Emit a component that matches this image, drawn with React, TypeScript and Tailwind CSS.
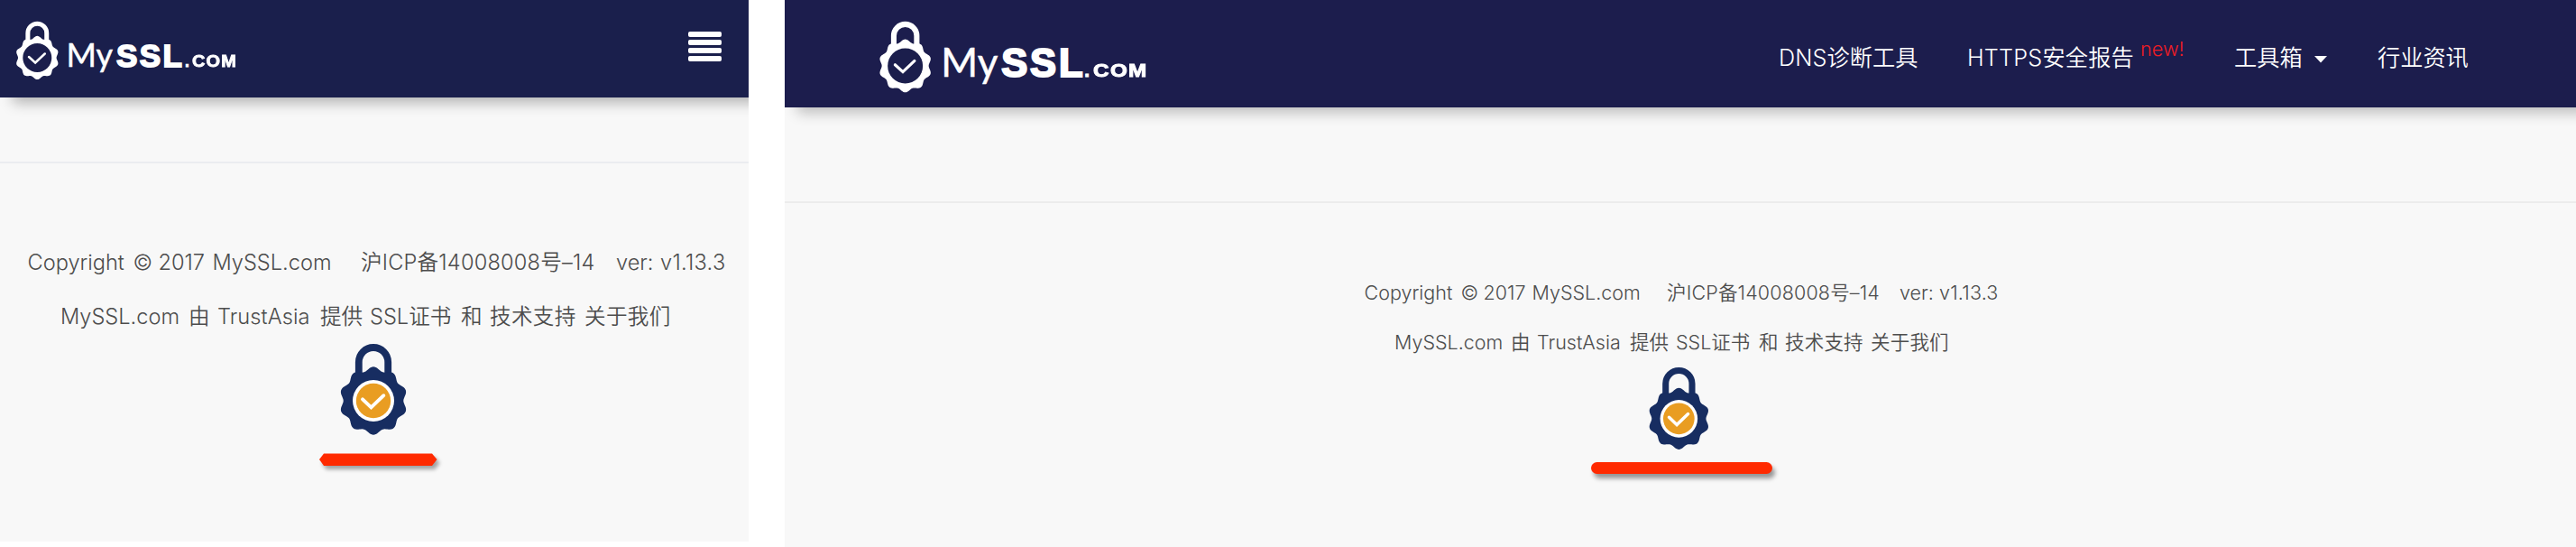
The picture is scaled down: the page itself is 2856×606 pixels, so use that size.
import React from 'react';

const SCALLOP =
  Array.from({ length: 181 }, (_, i) => {
    const a = (i * 2 * Math.PI) / 180;
    const r = 35.5 + 2.2 * Math.cos(10 * a);
    return `${i ? 'L' : 'M'}${(r * Math.sin(a)).toFixed(2)} ${(-r * Math.cos(a)).toFixed(2)}`;
  }).join('') + 'Z';

function LockLogo({ className }: { className: string }) {
  return (
    <svg viewBox="-38 -64 76 102" className={className}>
      <path d="M-16.3 -27V-42.7A16.3 16.3 0 0 1 16.3 -42.7V-27" fill="none" stroke="#fff" strokeWidth="7.8" />
      <path d={SCALLOP} fill="#fff" />
      <circle r="25" fill="#1b1e4c" />
      <path d="M-14.5 -1.5L-3.4 8.6L13.2 -7" fill="none" stroke="#fff" strokeWidth="4" strokeLinecap="round" />
    </svg>
  );
}

function LockBadge({ className }: { className: string }) {
  return (
    <svg viewBox="-38 -64 76 102" className={className}>
      <path d="M-16.2 -27V-42.8A16.2 16.2 0 0 1 16.2 -42.8V-27" fill="none" stroke="#172d61" strokeWidth="7.8" />
      <path d={SCALLOP} fill="#172d61" />
      <circle r="23" fill="#fff" />
      <circle r="19.2" fill="#e99d22" />
      <path d="M-12 -1.7L-2.5 7.4L11.3 -5.8" fill="none" stroke="#fff" strokeWidth="3.9" strokeLinecap="round" />
    </svg>
  );
}

function Word({ className, children }: { className: string; children: React.ReactNode }) {
  return <span className={`block shrink-0 whitespace-pre ${className}`}>{children}</span>;
}

function MobileView() {
  return (
    <section className="flex h-[600px] w-[830px] flex-col overflow-hidden bg-[#f8f8f8]">
      <header className="flex h-[108px] shrink-0 items-start justify-between bg-[#1a1f4c] pl-[17px] pr-[30px] shadow-[14px_6px_14px_rgba(0,0,0,0.28)]">
        <div className="flex items-start pt-[23px] text-white">
          <LockLogo className="h-[65.3px] w-[48.6px] shrink-0" />
          <div className="flex items-baseline pl-[8px] pt-[13px] leading-[48px]">
            <Word className="w-[55.5px] font-[Lato] text-[36px] [-webkit-text-stroke:0.5px_#fff]">My</Word>
            <Word className="w-[76px] font-['Liberation_Sans'] text-[35px] font-bold tracking-[2.4px] [-webkit-text-stroke:1.8px_#fff]">SSL</Word>
            <Word className="w-[7.5px] font-['Liberation_Sans'] text-[17.5px] font-bold [-webkit-text-stroke:0.8px_#fff]">.</Word>
            <Word className="origin-left scale-x-[1.14] font-['Liberation_Sans'] text-[17.5px] font-bold tracking-[1px] [-webkit-text-stroke:0.8px_#fff]">COM</Word>
          </div>
        </div>
        <div className="flex w-[37px] flex-col gap-[3px] pt-[35px]">
          <i className="block h-[6px] rounded-[2px] bg-white" />
          <i className="block h-[6px] rounded-[2px] bg-white" />
          <i className="block h-[6px] rounded-[2px] bg-white" />
          <i className="block h-[6px] rounded-[2px] bg-white" />
        </div>
      </header>
      <div className="h-[71px] shrink-0" />
      <footer className="flex flex-col border-t-2 border-[#ebecf0] pt-[80px] font-[Inter,'Noto_Sans_CJK_SC',sans-serif] text-[23.6px] font-[350] leading-[60px] text-[#4d4d4d]">
        <div className="flex pl-[30.5px]">
          <Word className="w-[117px]">Copyright</Word>
          <Word className="w-[28px]">©</Word>
          <Word className="w-[60px]">2017</Word>
          <Word className="w-[164.5px]">MySSL.com</Word>
          <Word className="w-[283px] tracking-[0.2px]">沪ICP备14008008号–14</Word>
          <Word className="w-[49px]">ver:</Word>
          <Word className="w-[74px] tracking-[0.3px]">v1.13.3</Word>
        </div>
        <div className="flex pl-[67px]">
          <Word className="w-[142px]">MySSL.com</Word>
          <Word className="w-[32px]">由</Word>
          <Word className="w-[114px] tracking-[0.1px]">TrustAsia</Word>
          <Word className="w-[55px]">提供</Word>
          <Word className="w-[101px]">SSL证书</Word>
          <Word className="w-[32px]">和</Word>
          <Word className="w-[105px] tracking-[0.3px]">技术支持</Word>
          <Word className="w-[96px] tracking-[0.3px]">关于我们</Word>
        </div>
        <LockBadge className="ml-[376px] mt-[-1px] h-[102px] w-[76px]" />
        <svg viewBox="0 0 150 30" className="ml-[350px] mt-[14.5px] h-[30px] w-[150px] drop-shadow-[3px_4px_2px_rgba(0,0,0,0.35)]">
          <path d="M4 12L9 5.5H129L134.5 12L129 19H9Z" fill="#ff2a00" />
        </svg>
      </footer>
    </section>
  );
}

function DesktopView() {
  return (
    <section className="flex h-[606px] w-[1986px] flex-col overflow-hidden bg-[#f8f8f8]">
      <header className="flex h-[119px] shrink-0 items-start bg-[#1c1d4d] pl-[104px] text-white shadow-[14px_6px_14px_rgba(0,0,0,0.24)]">
        <div className="flex w-[998px] items-start pt-[23px]">
          <LockLogo className="h-[79.6px] w-[59.3px] shrink-0" />
          <div className="flex items-baseline pl-[10px] pt-[15.5px] leading-[58px]">
            <Word className="w-[67px] font-[Lato] text-[44px] [-webkit-text-stroke:0.5px_#fff]">My</Word>
            <Word className="w-[92px] font-['Liberation_Sans'] text-[43.5px] font-bold tracking-[2.8px] [-webkit-text-stroke:2.2px_#fff]">SSL</Word>
            <Word className="w-[9.5px] font-['Liberation_Sans'] text-[20.5px] font-bold [-webkit-text-stroke:1px_#fff]">.</Word>
            <Word className="origin-left scale-x-[1.18] font-['Liberation_Sans'] text-[20.5px] font-bold tracking-[1.2px] [-webkit-text-stroke:1px_#fff]">COM</Word>
          </div>
        </div>
        <nav className="flex font-[Inter,'Noto_Sans_CJK_SC',sans-serif] text-[25.2px] font-[350] leading-[128px]">
          <Word className="w-[209px] tracking-[0.1px]">DNS诊断工具</Word>
          <Word className="w-[192px] tracking-[0.2px]">HTTPS安全报告</Word>
          <Word className="w-[104px] text-[21.7px] font-light leading-[108px] text-[#ee1c24]">new!</Word>
          <Word className="w-[89px]">工具箱</Word>
          <svg viewBox="0 0 14 8" className="mt-[62px] h-[8px] w-[14px]">
            <path d="M0 0H14L7 7.5Z" fill="#fff" />
          </svg>
          <Word className="pl-[56px]">行业资讯</Word>
        </nav>
      </header>
      <div className="h-[104px] shrink-0" />
      <footer className="flex flex-col border-t-2 border-[#ececec] pt-[72px] font-[Inter,'Noto_Sans_CJK_SC',sans-serif] text-[21.5px] font-[350] leading-[55px] text-[#4d4d4d]">
        <div className="flex pl-[642.5px]">
          <Word className="w-[107px]">Copyright</Word>
          <Word className="w-[25px]">©</Word>
          <Word className="w-[54px]">2017</Word>
          <Word className="w-[149.5px]">MySSL.com</Word>
          <Word className="w-[258px] tracking-[0.15px]">沪ICP备14008008号–14</Word>
          <Word className="w-[44px]">ver:</Word>
          <Word className="w-[70px] tracking-[0.2px]">v1.13.3</Word>
        </div>
        <div className="flex pl-[676px]">
          <Word className="w-[129px]">MySSL.com</Word>
          <Word className="w-[29px]">由</Word>
          <Word className="w-[103px]">TrustAsia</Word>
          <Word className="w-[51px]">提供</Word>
          <Word className="w-[92px]">SSL证书</Word>
          <Word className="w-[29px]">和</Word>
          <Word className="w-[95px] tracking-[0.2px]">技术支持</Word>
          <Word className="w-[88px] tracking-[0.2px]">关于我们</Word>
        </div>
        <LockBadge className="ml-[957px] mt-[-1px] h-[92.2px] w-[68.7px]" />
        <div className="ml-[894px] mt-[13.8px] h-[13px] w-[201px] rounded-full bg-[#ff2a00] shadow-[3px_5px_5px_rgba(0,0,0,0.4)]" />
      </footer>
    </section>
  );
}

export default function App() {
  return (
    <main className="flex h-[606px] w-[2856px] items-start gap-10 overflow-hidden bg-white">
      <MobileView />
      <DesktopView />
    </main>
  );
}
